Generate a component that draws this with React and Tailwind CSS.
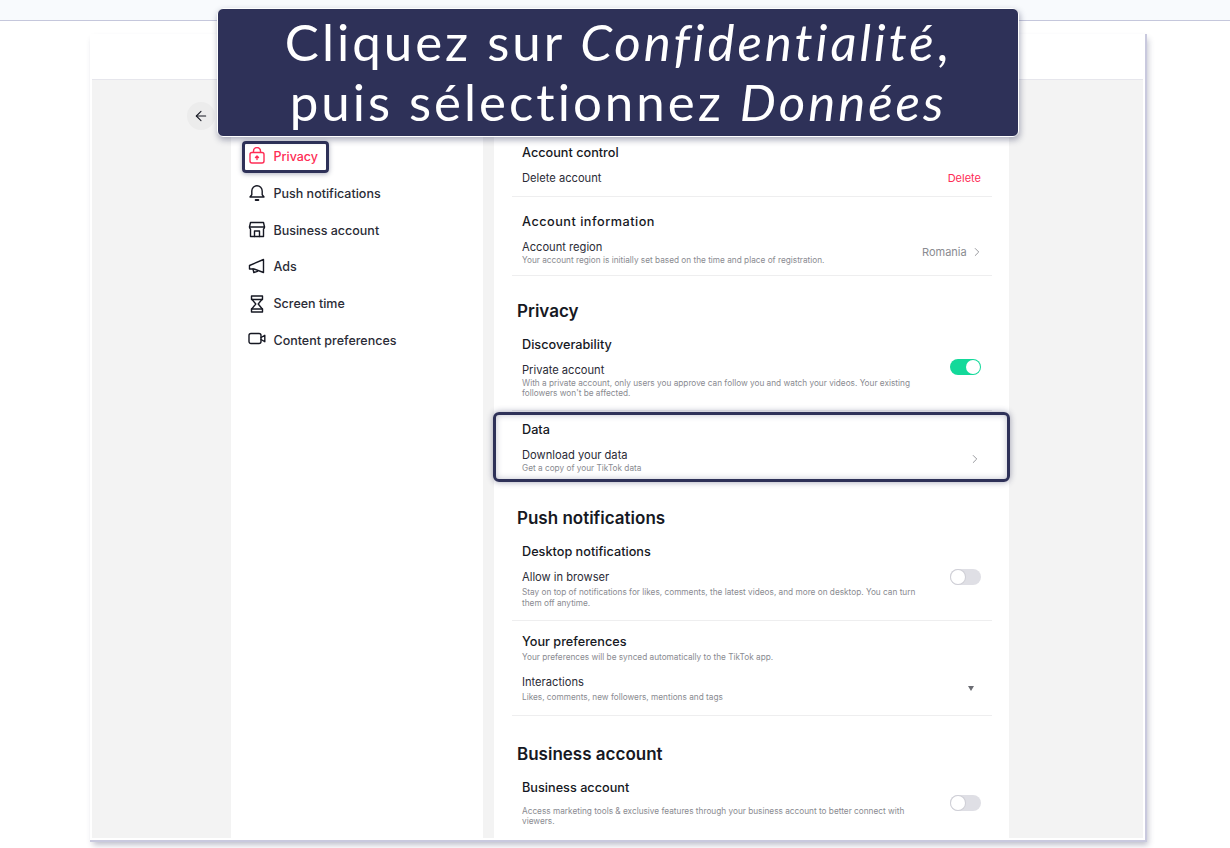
import React from "react";
import { ArrowLeft, ChevronRight } from "lucide-react";

const INK = "#2e3158";

function Icon({ children, color = "#161823" }) {
  return (
    <svg width="18" height="18" viewBox="0 0 18 18" fill="none" stroke={color} strokeWidth="1.4" strokeLinejoin="round" strokeLinecap="round" className="-translate-y-px">
      {children}
    </svg>
  );
}

const NAV = [
  {
    label: "Push notifications",
    icon: (
      <Icon>
        <path d="M2 13h14l-1.800-2.200V7a5.200 5.200 0 0 0-10.400 0v3.800L2 13Z" />
        <path d="M7.600 16h2.800" strokeWidth="1.800" />
      </Icon>
    ),
  },
  {
    label: "Business account",
    icon: (
      <Icon>
        <path d="M2.500 1.500h13l1 4.500a2.400 2.400 0 0 1-1 2v7.500h-13V8a2.400 2.400 0 0 1-1-2l1-4.500Z" />
        <path d="M1.500 6h15" />
        <path d="M6.500 15.500v-5.500h5v5.500" />
      </Icon>
    ),
  },
  {
    label: "Ads",
    icon: (
      <Icon>
        <path d="M15.500 1.500v13L6 11H1.500V7.500L15.500 1.500Z" />
        <path d="M5 11l.8 3.500 3.700-1.200" />
      </Icon>
    ),
  },
  {
    label: "Screen time",
    icon: (
      <Icon>
        <path d="M3.500 1h11v2.700L10.200 9l4.300 5.300V17h-11v-2.700L7.800 9 3.500 3.700V1Z" />
        <path d="M3.500 4.500h11M3.500 14h11" />
      </Icon>
    ),
  },
  {
    label: "Content preferences",
    icon: (
      <Icon>
        <rect x="1" y="2.500" width="12" height="10" rx="2" />
        <path d="M13 6.500l3.800-2.200v6.400L13 8.500" />
      </Icon>
    ),
  },
];

function Toggle({ on, className = "" }) {
  return (
    <div
      className={
        "flex h-4 w-[31px] shrink-0 items-center rounded-full p-px " +
        (on ? "justify-end bg-[#13d99a] " : "justify-start bg-[#dfdfe5] ") +
        className
      }
    >
      <div className={"h-[14px] w-[14px] rounded-full bg-white " + (on ? "" : "ring-1 ring-[#cfcfd6]")} />
    </div>
  );
}

function Heading({ children, className = "" }) {
  return <h2 className={"-ml-[5px] h-6 text-[17px] leading-6 font-semibold text-[#161823] " + className}>{children}</h2>;
}

function GroupTitle({ children, className = "" }) {
  return <div className={"h-5 text-[12.700px] leading-5 font-medium text-[#161823] " + className}>{children}</div>;
}

function RowTitle({ children, className = "" }) {
  return <div className={"h-4 text-[11.150px] leading-4 text-[#2a2b36] " + className}>{children}</div>;
}

function Sub({ children, className = "" }) {
  return <p className={"w-[400px] text-[8.250px] leading-[10px] text-[#8a8b91] " + className}>{children}</p>;
}

function Settings() {
  return (
    <div className="w-[480px] pt-[39px] pl-[10px]">
      <div className="-ml-[10px] border-b border-[#eeeeef] pb-[10px] pl-[10px]">
        <GroupTitle>Account control</GroupTitle>
        <div className="mt-[7px] flex items-center justify-between pr-[11px]">
          <RowTitle>Delete account</RowTitle>
          <span className="text-[11px] leading-4 text-[#fe2c55]">Delete</span>
        </div>
      </div>

      <div className="-ml-[10px] border-b border-[#eeeeef] pt-[15px] pb-[10px] pl-[10px]">
        <GroupTitle className="tracking-[0.500px]">Account information</GroupTitle>
        <div className="mt-[7px] flex items-center justify-between pr-[12px]">
          <div>
            <RowTitle>Account region</RowTitle>
            <Sub>Your account region is initially set based on the time and place of registration.</Sub>
          </div>
          <div className="flex items-center gap-[3px] text-[11px] text-[#8a8b91]">
            Romania
            <ChevronRight size={14} strokeWidth={1.5} />
          </div>
        </div>
      </div>

      <Heading className="mt-[23px]">Privacy</Heading>
      <div className="-ml-[10px] border-b border-[#eeeeef] pb-[12px] pl-[10px]">
        <GroupTitle className="mt-[12px]">Discoverability</GroupTitle>
        <div className="mt-[7px] flex items-start justify-between pr-[11px]">
          <div>
            <RowTitle>Private account</RowTitle>
            <Sub>With a private account, only users you approve can follow you and watch your videos. Your existing followers won't be affected.</Sub>
          </div>
          <Toggle on className="-mt-[3px]" />
        </div>
      </div>

      <div className="pt-[9px]">
        <GroupTitle>Data</GroupTitle>
        <div className="mt-[7px] flex items-center justify-between pr-[10px]">
          <div>
            <RowTitle>Download your data</RowTitle>
            <Sub>Get a copy of your TikTok data</Sub>
          </div>
          <ChevronRight size={14} strokeWidth={1.5} className="-mt-[2px] text-[#8a8b91]" />
        </div>
      </div>

      <Heading className="mt-[33px]">Push notifications</Heading>
      <div className="-ml-[10px] border-b border-[#eeeeef] pb-[11px] pl-[10px]">
        <GroupTitle className="mt-[12px]">Desktop notifications</GroupTitle>
        <div className="mt-[7px] flex items-start justify-between pr-[11px]">
          <div>
            <RowTitle>Allow in browser</RowTitle>
            <Sub className="mt-[2px] leading-[11px]">Stay on top of notifications for likes, comments, the latest videos, and more on desktop. You can turn them off anytime.</Sub>
          </div>
          <Toggle />
        </div>
      </div>

      <div className="-ml-[10px] border-b border-[#eeeeef] pt-[11px] pb-[13px] pl-[10px]">
        <GroupTitle>Your preferences</GroupTitle>
        <Sub>Your preferences will be synced automatically to the TikTok app.</Sub>
        <div className="mt-[12px] flex items-center justify-between pr-[18px]">
          <div>
            <RowTitle>Interactions</RowTitle>
            <Sub className="mt-[2px]">Likes, comments, new followers, mentions and tags</Sub>
          </div>
          <div className="h-0 w-0 border-x-[3.500px] border-t-[5px] border-x-transparent border-t-[#6b6c73]" />
        </div>
      </div>

      <Heading className="mt-[26px]">Business account</Heading>
      <div className="-ml-[10px] border-b border-[#eeeeef] pb-[13px] pl-[10px]">
        <div className="mt-[12px] flex items-start justify-between pr-[11px]">
          <div>
            <GroupTitle>Business account</GroupTitle>
            <Sub className="mt-[8px]">Access marketing tools &amp; exclusive features through your business account to better connect with viewers.</Sub>
          </div>
          <Toggle className="mt-[17px]" />
        </div>
      </div>
    </div>
  );
}

export default function App() {
  return (
    <div className="relative h-[848px] w-[1230px] overflow-hidden bg-white font-['Inter',sans-serif]">
      <div className="h-[21px] border-b border-[#c5c7dc] bg-[#f8fafd]" />

      <div className="mt-[15px] ml-[92px] flex h-[802px] w-[1051px] flex-col overflow-hidden bg-[#f3f3f3] shadow-[0_0_0_2px_#fff,1px_1px_0_3px_#c9c9de,3px_5px_6px_2px_rgba(46,49,88,0.3)]">
        <div className="h-[44px] shrink-0 border-b border-[#e6e6ec] bg-white" />
        <div className="flex flex-1 items-start overflow-hidden">
          <div className="w-[95px] shrink-0 pt-[22px] pl-[95px]">
            <div className="flex h-7 w-7 items-center justify-center rounded-full bg-[#ececec]">
              <ArrowLeft size={16} strokeWidth={1.6} className="text-[#161823]" />
            </div>
          </div>
          <nav className="mt-[24px] ml-[44px] h-full w-[252px] shrink-0 bg-white pt-[35px] pl-[17px]">
            <div className="flex h-[36.800px] items-center gap-[7.500px] text-[12.500px] font-medium text-[#fe2c55]">
              <svg width="18" height="18" viewBox="0 0 18 18" fill="none" stroke="#fe2c55" strokeWidth="1.400" strokeLinejoin="round" className="-translate-y-px">
                <rect x="2" y="5.500" width="14" height="10.500" rx="2" />
                <path d="M5.500 5.500V4a3.500 3.500 0 0 1 7 0v1.500" />
                <path d="M9 9v3.500M7.500 10.500L9 9l1.500 1.500" strokeLinecap="round" />
              </svg>
              Privacy
            </div>
            {NAV.map((item) => (
              <div key={item.label} className="flex h-[36.800px] items-center gap-[7.500px] text-[12.500px] font-medium text-[#2a2b36]">
                {item.icon}
                {item.label}
              </div>
            ))}
          </nav>
          <main className="mt-[24px] ml-[11px] h-full w-[515px] shrink-0 bg-white pl-[18px]">
            <Settings />
          </main>
        </div>
      </div>

      {/* callouts over the screenshot */}
      <div
        className="absolute top-[141px] left-[242px] h-[32px] w-[87px] rounded-[4px] border-[3px] shadow-[0_1px_5px_rgba(46,49,88,0.4)]"
        style={{ borderColor: INK }}
      />
      <div
        className="absolute top-[412px] left-[493px] h-[70px] w-[517px] rounded-[6px] border-[3px] shadow-[0_0_6px_rgba(46,49,88,0.45),inset_0_0_6px_rgba(46,49,88,0.3)]"
        style={{ borderColor: INK }}
      />
      <div className="absolute top-[8px] left-[217px] flex h-[129px] w-[802px] flex-col items-center justify-center rounded-[6px] border border-white bg-[#2e3158] pb-[2px] font-['Lato',sans-serif] text-[51px] leading-[60px] text-white shadow-[1px_3px_6px_rgba(46,49,88,0.4)]">
        <div className="tracking-[3px]">
          Cliquez sur <em>Confidentialité</em>,
        </div>
        <div className="tracking-[3px]">
          puis sélectionnez <em>Données</em>
        </div>
      </div>
    </div>
  );
}
